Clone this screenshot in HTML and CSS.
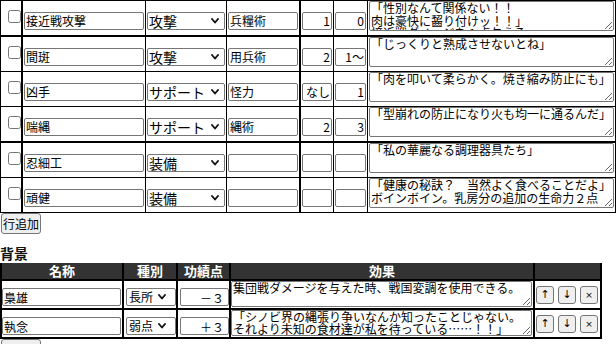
FILE: index.html
```html
<!DOCTYPE html>
<html lang="ja">
<head>
<meta charset="utf-8">
<title>忍法・背景</title>
<link rel="stylesheet" href="styles.css">
</head>
<body>
<table class="skills">
  <tr class="sep">
    <td class="chk"><input type="checkbox"></td>
    <td><input class="in name" value="接近戦攻撃"></td>
    <td><span class="selwrap"><select class="sel"><option selected>攻撃</option><option>サポート</option><option>装備</option></select><svg class="chev" viewBox="0 0 8 6"><polyline points="1,1 4,4.5 7,1"/></svg></span></td>
    <td class="thick"><input class="in skill" value="兵糧術"></td>
    <td><input class="in num range" value="1"></td>
    <td><input class="in num cost" value="0"></td>
    <td class="fx"><textarea class="ta">「性別なんて関係ない！！
肉は豪快に齧り付けッ！！」
接近戦ダメージを１点与える。</textarea></td>
  </tr>
  <tr>
    <td class="chk"><input type="checkbox"></td>
    <td><input class="in name" value="間斑"></td>
    <td><span class="selwrap"><select class="sel"><option selected>攻撃</option><option>サポート</option><option>装備</option></select><svg class="chev" viewBox="0 0 8 6"><polyline points="1,1 4,4.5 7,1"/></svg></span></td>
    <td class="thick"><input class="in skill" value="用兵術"></td>
    <td><input class="in num range" value="2"></td>
    <td><input class="in num cost" value="1～"></td>
    <td class="fx"><textarea class="ta">「じっくりと熟成させないとね」</textarea></td>
  </tr>
  <tr>
    <td class="chk"><input type="checkbox"></td>
    <td><input class="in name" value="凶手"></td>
    <td><span class="selwrap"><select class="sel"><option>攻撃</option><option selected>サポート</option><option>装備</option></select><svg class="chev" viewBox="0 0 8 6"><polyline points="1,1 4,4.5 7,1"/></svg></span></td>
    <td class="thick"><input class="in skill" value="怪力"></td>
    <td><input class="in num range" value="なし"></td>
    <td><input class="in num cost" value="1"></td>
    <td class="fx"><textarea class="ta">「肉を叩いて柔らかく。焼き縮み防止にも」</textarea></td>
  </tr>
  <tr class="sep">
    <td class="chk"><input type="checkbox"></td>
    <td><input class="in name" value="喘縄"></td>
    <td><span class="selwrap"><select class="sel"><option>攻撃</option><option selected>サポート</option><option>装備</option></select><svg class="chev" viewBox="0 0 8 6"><polyline points="1,1 4,4.5 7,1"/></svg></span></td>
    <td class="thick"><input class="in skill" value="縄術"></td>
    <td><input class="in num range" value="2"></td>
    <td><input class="in num cost" value="3"></td>
    <td class="fx"><textarea class="ta">「型崩れの防止になり火も均一に通るんだ」</textarea></td>
  </tr>
  <tr>
    <td class="chk"><input type="checkbox"></td>
    <td><input class="in name" value="忍細工"></td>
    <td><span class="selwrap"><select class="sel"><option>攻撃</option><option>サポート</option><option selected>装備</option></select><svg class="chev" viewBox="0 0 8 6"><polyline points="1,1 4,4.5 7,1"/></svg></span></td>
    <td class="thick"><input class="in skill" value=""></td>
    <td><input class="in num range" value=""></td>
    <td><input class="in num cost" value=""></td>
    <td class="fx"><textarea class="ta">「私の華麗なる調理器具たち」</textarea></td>
  </tr>
  <tr>
    <td class="chk"><input type="checkbox"></td>
    <td><input class="in name" value="頑健"></td>
    <td><span class="selwrap"><select class="sel"><option>攻撃</option><option>サポート</option><option selected>装備</option></select><svg class="chev" viewBox="0 0 8 6"><polyline points="1,1 4,4.5 7,1"/></svg></span></td>
    <td class="thick"><input class="in skill" value=""></td>
    <td><input class="in num range" value=""></td>
    <td><input class="in num cost" value=""></td>
    <td class="fx"><textarea class="ta">「健康の秘訣？　当然よく食べることだよ」
ボインボイン。乳房分の追加の生命力２点</textarea></td>
  </tr>
</table>
<button class="add" type="button">行追加</button>

<h3 class="heading">背景</h3>
<table class="bg">
  <tr>
    <th>名称</th>
    <th>種別</th>
    <th>功績点</th>
    <th>効果</th>
    <th></th>
  </tr>
  <tr>
    <td class="n"><input class="in bname" value="梟雄"></td>
    <td class="k"><span class="selwrap"><select class="bsel"><option selected>長所</option><option>弱点</option></select><svg class="chev bchev" viewBox="0 0 8 6"><polyline points="1,1 4,4.5 7,1"/></svg></span></td>
    <td class="p"><input class="in num pt" value="－３"></td>
    <td class="e"><textarea class="bta">集団戦ダメージを与えた時、戦国変調を使用できる。</textarea></td>
    <td class="b"><div class="btns"><button class="mv" type="button">↑</button><button class="mv" type="button">↓</button><button class="mv x" type="button">×</button></div></td>
  </tr>
  <tr>
    <td class="n"><input class="in bname" value="執念"></td>
    <td class="k"><span class="selwrap"><select class="bsel"><option>長所</option><option selected>弱点</option></select><svg class="chev bchev" viewBox="0 0 8 6"><polyline points="1,1 4,4.5 7,1"/></svg></span></td>
    <td class="p"><input class="in num pt" value="＋３"></td>
    <td class="e"><textarea class="bta">「シノビ界の縄張り争いなんか知ったことじゃない。
それより未知の食材達が私を待っている……！！」</textarea></td>
    <td class="b"><div class="btns"><button class="mv" type="button">↑</button><button class="mv" type="button">↓</button><button class="mv x" type="button">×</button></div></td>
  </tr>
</table>
<button class="add" type="button">行追加</button>
</body>
</html>
```

FILE: styles.css
```css
html, body {
  margin: 0;
  padding: 0;
  overflow: hidden;
  background: #fff;
  color: #000;
  font-family: "Noto Sans CJK JP", "Noto Sans", sans-serif;
}

/* ---------- top table ---------- */
.skills {
  border-collapse: separate;
  border-spacing: 0;
}
.skills td {
  border-right: 1px solid #000;
  border-bottom: 1px solid #000;
  padding: 0 1px;
  vertical-align: middle;
}
.skills tr:first-child td {
  border-top: 1px solid #000;
}
.skills tr.sep td {
  border-bottom-width: 2px;
}
.skills td.chk {
  border-left: 1px solid #000;
  border-right-width: 2px;
  padding: 0 0 0 6px;
  width: 17px;
}
.skills td.thick {
  border-right-width: 2px;
}
.skills td.fx {
  padding: 0 1px 4px 1px;
}
.chk input {
  display: block;
  width: 13px;
  height: 13px;
  margin: 0 0 3px 1px;
}

.in {
  box-sizing: border-box;
  height: 18px;
  padding: 0 1px;
  border: 1px solid #767676;
  border-radius: 2px;
  background: #fff;
  color: #000;
  font-family: "Noto Sans CJK JP", sans-serif;
  font-size: 12px;
  vertical-align: middle;
}
.num { text-align: right; }
.name { width: 120px; }
.skill { width: 70px; }
.range { width: 30px; }
.cost { width: 31px; }

.selwrap {
  position: relative;
  display: inline-block;
  vertical-align: middle;
}
.sel, .bsel {
  -webkit-appearance: none;
  appearance: none;
  display: block;
  box-sizing: border-box;
  height: 18px;
  margin: 0;
  border: 1px solid #767676;
  border-radius: 2px;
  background: #fff;
  color: #000;
  font-family: "Noto Sans CJK JP", sans-serif;
}
.sel {
  width: 78px;
  padding: 0 0 0 1px;
  font-size: 14px;
  line-height: 16px;
}
.chev {
  position: absolute;
  right: 6px;
  top: 6px;
  width: 8px;
  height: 6px;
  pointer-events: none;
}
.chev polyline {
  fill: none;
  stroke: #111;
  stroke-width: 1.9;
  stroke-linecap: round;
  stroke-linejoin: round;
}
.bchev {
  right: 10px;
}

.ta, .bta {
  box-sizing: border-box;
  display: block;
  margin: 0;
  padding: 0 1px;
  border: 1px solid #767676;
  border-radius: 2px;
  overflow: hidden;
  color: #000;
  background: #fff;
  font-family: "Noto Sans CJK JP", sans-serif;
  font-size: 12px;
}
.ta {
  width: 245px;
  height: 30px;
  line-height: 12.6px;
}

/* ---------- buttons ---------- */
.add {
  display: block;
  box-sizing: border-box;
  height: 21px;
  margin: 0 0 0 1px;
  padding: 0 1px;
  border: 1px solid #767676;
  border-radius: 3px;
  background: #efefef;
  color: #000;
  font-family: "Noto Sans CJK JP", sans-serif;
  font-size: 12px;
  line-height: 17px;
}

.heading {
  margin: 10px 0 0 0;
  font-size: 14px;
  line-height: 19px;
  font-weight: bold;
  color: #111;
}

/* ---------- background table ---------- */
.bg {
  border-collapse: separate;
  border-spacing: 0;
}
.bg th {
  background: #333;
  color: #fff;
  font-size: 13px;
  font-weight: bold;
  line-height: 16px;
  padding: 0;
  border-right: 2px solid #000;
  border-bottom: 2px solid #000;
}
.bg td {
  border-right: 2px solid #000;
  border-bottom: 2px solid #000;
  padding: 0;
  vertical-align: middle;
}
.bg th:first-child,
.bg td:first-child {
  border-left: 2px solid #000;
}
.bg td.n { padding: 0 1px 0 0; }
.bg td.k { padding: 0 0 0 2px; }
.bg td.p { padding: 0 0 0 2px; }
.bg td.e { padding: 0 1px 1px 0; }
.bg td.b { padding: 0 0 0 1px; width: 64px; }

.bname { width: 119px; }
.pt { width: 49px; padding-right: 4px; }
.bsel {
  width: 50px;
  padding: 0 0 0 2px;
  font-size: 12px;
  line-height: 16px;
}
.bta {
  width: 301px;
  height: 26px;
  line-height: 12px;
}

.btns {
  display: flex;
  gap: 4px;
}
.mv {
  box-sizing: border-box;
  width: 18px;
  height: 18px;
  padding: 0;
  border: 1px solid #767676;
  border-radius: 3px;
  background: #efefef;
  color: #000;
  font-family: "DejaVu Sans", sans-serif;
  font-size: 11px;
  line-height: 16px;
}
.mv.x { font-size: 9px; }
```
